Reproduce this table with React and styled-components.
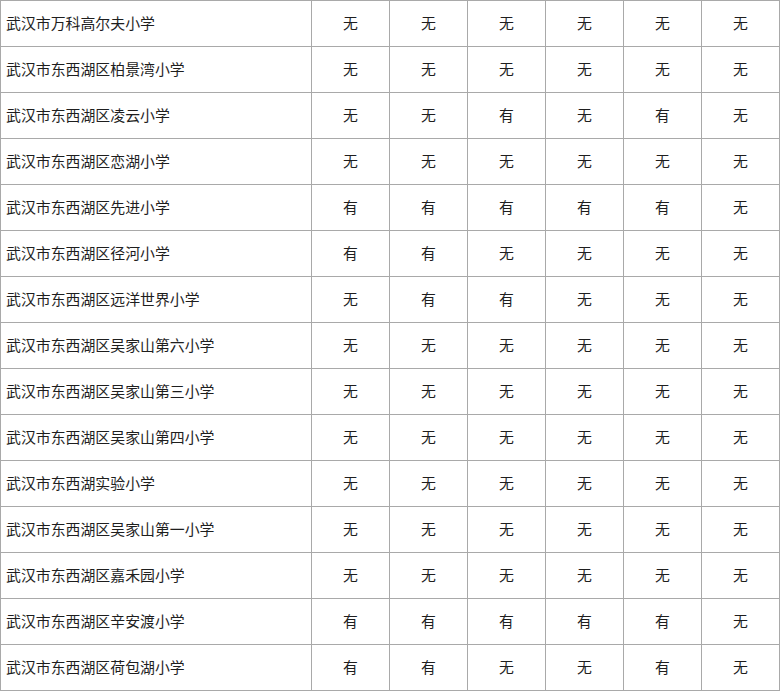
import React from 'react'
import styled, { createGlobalStyle } from 'styled-components';

const GlobalStyle = createGlobalStyle`
  body {
    margin: 0;
    background: #fff;
  }
`;

const Grid = styled.div`
  display: grid;
  grid-template-columns: 310px repeat(6, 77px);
  grid-auto-rows: 45px;
  gap: 1px;
  padding: 1px;
  width: 780px;
  box-sizing: border-box;
  background: #a9a9a9;
  font-family: "Noto Sans CJK SC", "Noto Sans", sans-serif;
  font-size: 14.9px;
  line-height: 1;
  color: #1e1e1e;
`;

const Cell = styled.div`
  background: #fff;
  display: flex;
  align-items: center;
  justify-content: ${props => props.name ? 'flex-start' : 'center'};
  padding-left: ${props => props.name ? '5px' : '0'};
  white-space: nowrap;
`;

const rows = [
  ['武汉市万科高尔夫小学', '无无无无无无'],
  ['武汉市东西湖区柏景湾小学', '无无无无无无'],
  ['武汉市东西湖区凌云小学', '无无有无有无'],
  ['武汉市东西湖区恋湖小学', '无无无无无无'],
  ['武汉市东西湖区先进小学', '有有有有有无'],
  ['武汉市东西湖区径河小学', '有有无无无无'],
  ['武汉市东西湖区远洋世界小学', '无有有无无无'],
  ['武汉市东西湖区吴家山第六小学', '无无无无无无'],
  ['武汉市东西湖区吴家山第三小学', '无无无无无无'],
  ['武汉市东西湖区吴家山第四小学', '无无无无无无'],
  ['武汉市东西湖实验小学', '无无无无无无'],
  ['武汉市东西湖区吴家山第一小学', '无无无无无无'],
  ['武汉市东西湖区嘉禾园小学', '无无无无无无'],
  ['武汉市东西湖区辛安渡小学', '有有有有有无'],
  ['武汉市东西湖区荷包湖小学', '有有无无有无'],
];

export default function App() {
  return (
    <>
      <GlobalStyle />
      <Grid>
        {rows.map(([school, marks]) => (
          <React.Fragment key={school}>
            <Cell name>{school}</Cell>
            {marks.split('').map((m, i) => (
              <Cell key={i}>{m}</Cell>
            ))}
          </React.Fragment>
        ))}
      </Grid>
    </>
  );
}
